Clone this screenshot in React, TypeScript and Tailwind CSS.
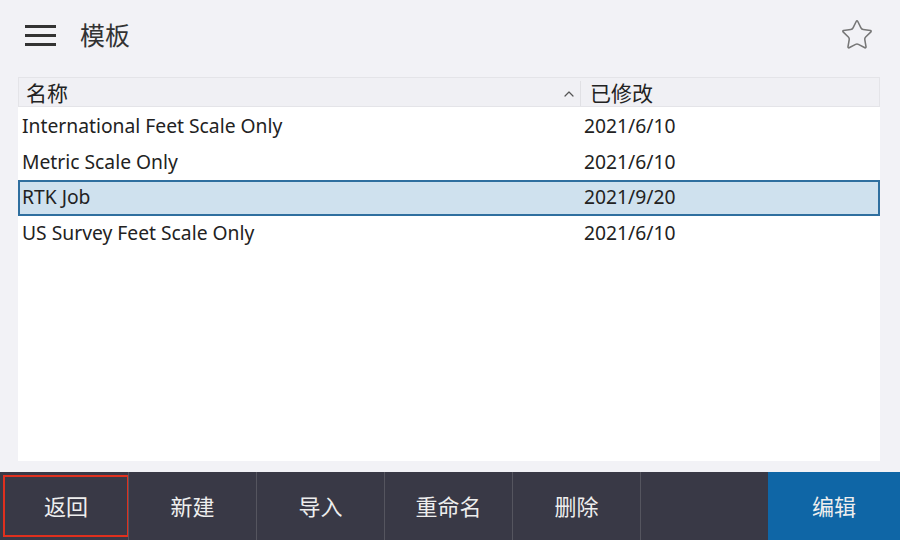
import { Star, ChevronUp } from "lucide-react";

const rows = [
  { name: "International Feet Scale Only", date: "2021/6/10" },
  { name: "Metric Scale Only", date: "2021/6/10" },
  { name: "RTK Job", date: "2021/9/20", selected: true },
  { name: "US Survey Feet Scale Only", date: "2021/6/10" },
];

const buttons = ["返回", "新建", "导入", "重命名", "删除", ""];

export default function App() {
  return (
    <div
      className="flex h-[540px] w-[900px] flex-col overflow-hidden bg-[#f2f2f6] text-[#222]"
      style={{ fontFamily: '"Noto Sans", "Open Sans", "Noto Sans CJK SC", sans-serif' }}
    >
      {/* Header */}
      <div className="flex h-[70px] items-center pl-[25px] pr-[26px]">
        <div className="flex w-[31px] flex-col gap-[6px]">
          <span className="h-[3px] bg-[#333]" />
          <span className="h-[3px] bg-[#333]" />
          <span className="h-[3px] bg-[#333]" />
        </div>
        <span className="ml-[24px] text-[25px] leading-none text-[#333]">模板</span>
        <Star className="ml-auto h-[34px] w-[34px] text-[#777]" strokeWidth={1.1} />
      </div>

      {/* Table */}
      <div className="ml-[18px] mr-[20px] mt-[7px] flex h-[384px] flex-col bg-white">
        <div className="flex h-[30px] items-center border border-[#e4e4e8] bg-[#f0f0f4] pt-[3px] text-[21px] leading-none">
          <div className="flex h-full w-[562px] items-center border-r border-[#e0e0e4] pl-[7px]">
            <span>名称</span>
            <ChevronUp className="ml-auto mr-[3px] h-[16px] w-[16px] text-[#555]" strokeWidth={1.8} />
          </div>
          <span className="pl-[9px]">已修改</span>
        </div>
        <div className="mt-[2px]">
          {rows.map((r) => (
            <div
              key={r.name}
              className={
                r.selected
                  ? "flex h-[35.5px] items-center border-2 border-[#2f6f9f] bg-[#cfe1ee] text-[19.3px]"
                  : "flex h-[35.5px] items-center border-2 border-transparent text-[19.3px]"
              }
            >
              <span className="w-[564px] pl-[2px]">{r.name}</span>
              <span>{r.date}</span>
            </div>
          ))}
        </div>
      </div>

      {/* Bottom bar */}
      <div className="mt-auto flex h-[68px] bg-[#393946] text-[22px] text-[#eee]">
        {buttons.map((b, i) => (
          <div
            key={i}
            className={
              i === 0
                ? "m-[3px] mr-[-1px] flex w-[126px] items-center justify-center border-2 border-[#e0301e]"
                : "flex w-[128px] items-center justify-center border-l border-[#55555f]"
            }
          >
            {b}
          </div>
        ))}
        <div className="flex flex-1 items-center justify-center bg-[#0f66a6]">编辑</div>
      </div>
    </div>
  );
}
